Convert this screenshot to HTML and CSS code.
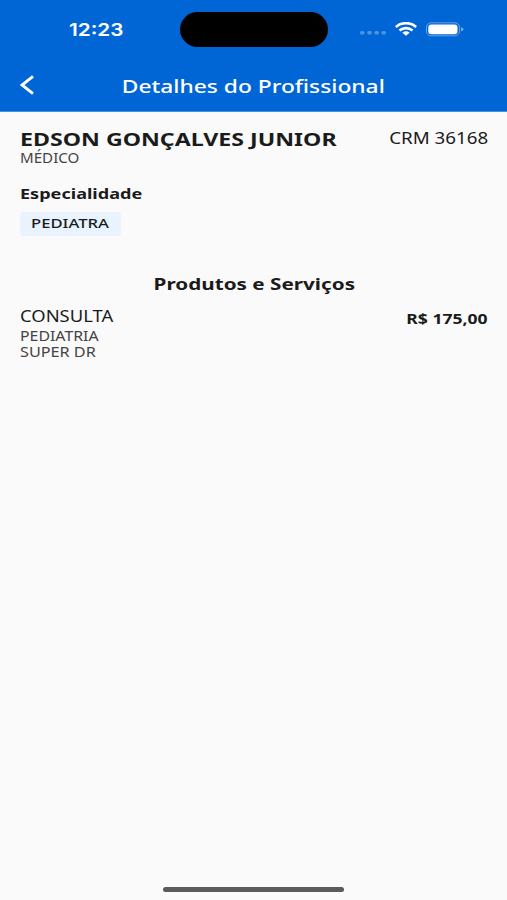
FILE: index.html
```
<!DOCTYPE html>
<html lang="pt-BR">
<head>
<meta charset="utf-8">
<meta name="viewport" content="width=device-width, initial-scale=1">
<title>Detalhes do Profissional</title>
<link rel="stylesheet" href="styles.css">
</head>
<body>
<header class="header">
  <div class="status">
    <div class="status-left"><span class="wide time">12:23</span></div>
    <div class="island"></div>
    <div class="status-right">
      <svg class="dots" width="26" height="4" viewBox="0 0 26 4"><g fill="#fff" opacity=".3"><rect x="0" width="4.6" height="3.6" rx="1.7"/><rect x="7.2" width="4.6" height="3.6" rx="1.7"/><rect x="14.4" width="4.6" height="3.6" rx="1.7"/><rect x="21.4" width="4.6" height="3.6" rx="1.7"/></g></svg>
      <svg class="wifi" width="22" height="14" viewBox="0 0 22 14"><g fill="none" stroke="#fff" stroke-width="2.7"><path d="M.8 5C6.400-.1 15.600-.1 21.200 5"/><path d="M4.500 8.600C8.200 5.200 13.800 5.200 17.500 8.600"/></g><path d="M7.400 10.700C9.500 8.900 12.500 8.900 14.600 10.700L11 13.700Z" fill="#fff"/></svg>
      <svg class="battery" width="38" height="15" viewBox="0 0 38 15"><rect x=".5" y=".8" width="33" height="13" rx="4.500" fill="none" stroke="#fff" stroke-opacity=".4"/><rect x="2.300" y="2.400" width="29.200" height="9.800" rx="3" fill="#fff"/><path d="M35.200 5.200Q37.300 5.700 37.300 7.300T35.200 9.400Z" fill="#fff" opacity=".5"/></svg>
    </div>
  </div>
  <nav class="nav">
    <svg class="back" width="15" height="20" viewBox="0 0 15 20"><path d="M13 1.300L2 10L13 18.700" fill="none" stroke="#fff" stroke-width="2.900"/></svg>
    <h1 class="wide nav-title">Detalhes do Profissional</h1>
  </nav>
</header>
<main class="content">
  <section class="person">
    <div>
      <h2 class="wide name">EDSON GONÇALVES JUNIOR</h2>
      <p class="wide role">MÉDICO</p>
    </div>
    <span class="wide right crm">CRM 36168</span>
  </section>
  <h3 class="wide label">Especialidade</h3>
  <div class="chip"><span class="wide chip-text">PEDIATRA</span></div>
  <h2 class="wide section-title">Produtos e Serviços</h2>
  <section class="service">
    <div>
      <h3 class="wide service-name">CONSULTA</h3>
      <p class="wide detail detail-area">PEDIATRIA</p>
      <p class="wide detail detail-plan">SUPER DR</p>
    </div>
    <span class="wide right price">R$ 175,00</span>
  </section>
</main>
<footer class="footer"><div class="home-bar"></div></footer>
</body>
</html>
```
FILE: styles.css
```
* { box-sizing: border-box; }
body { margin: 0; height: 900px; display: flex; flex-direction: column; background: #fafafa; color: #1b1b1b; font-family: "Noto Sans", sans-serif; overflow: hidden; }
h1, h2, h3, p { margin: 0; }
svg { display: block; flex: none; }

/* Text is drawn with widened letterforms. */
.wide { display: block; width: max-content; white-space: nowrap; transform: scaleX(var(--stretch, 1.2)); transform-origin: left center; }
.right { transform-origin: right center; }

.header { height: 112px; flex: none; background: #0066d6; color: #fff; border-bottom: 1px solid #4a90df; }
.status { height: 58px; display: grid; grid-template-columns: 180px 148px 1fr; align-items: center; }
.status-left { padding: 2px 0 0 69px; }
.time { font: 600 17.6px/24px Inter, sans-serif; --stretch: 1.18; }
.island { height: 35px; border-radius: 18px; background: #000; }
.status-right { display: flex; align-items: center; padding-left: 32px; }
.dots { margin-top: 8px; }
.wifi { margin-left: 9px; }
.battery { margin-left: 9px; }
.nav { height: 54px; display: grid; grid-template-columns: 20px 1fr 20px; align-items: center; }
.back { grid-column: 1; margin-left: 20px; }
.nav-title { grid-column: 2; justify-self: center; margin-top: 2px; transform-origin: center; font-size: 18.6px; line-height: 26px; font-weight: 500; --stretch: 1.226; }

.content { flex: 1; padding: 17px 19px 0 20px; }
.person, .service { display: flex; justify-content: space-between; }
.name { font-size: 18.4px; line-height: 20px; font-weight: 700; --stretch: 1.26; }
.role { font-size: 13.5px; line-height: 18px; color: #444; font-weight: 400; --stretch: 1.12; }
.crm { margin-top: 1px; font-size: 15.4px; line-height: 18px; --stretch: 1.219; }
.label { margin-top: 16px; font-size: 15px; line-height: 20px; font-weight: 700; --stretch: 1.205; }
.chip { width: 101px; height: 24px; margin-top: 9px; padding: 1px 0 0 11px; border-radius: 4px; background: #e8f3fe; }
.chip-text { font-size: 13.3px; line-height: 20px; font-weight: 500; --stretch: 1.25; }
.section-title { margin: 37px auto 0; transform-origin: center; font-size: 16.3px; line-height: 22px; font-weight: 700; --stretch: 1.27; }
.service { margin-top: 11px; }
.service-name { font-size: 15.6px; line-height: 20px; font-weight: 400; margin-bottom: 3px; --stretch: 1.18; }
.detail { font-size: 13.5px; line-height: 15.5px; color: #444; }
.detail-area { --stretch: 1.175; }
.price { margin-top: 3px; font-size: 13.3px; line-height: 20px; font-weight: 700; --stretch: 1.32; }

.footer { height: 13px; flex: none; display: flex; justify-content: center; }
.home-bar { width: 181px; height: 5px; border-radius: 3px; background: #5b5b5b; }
```
